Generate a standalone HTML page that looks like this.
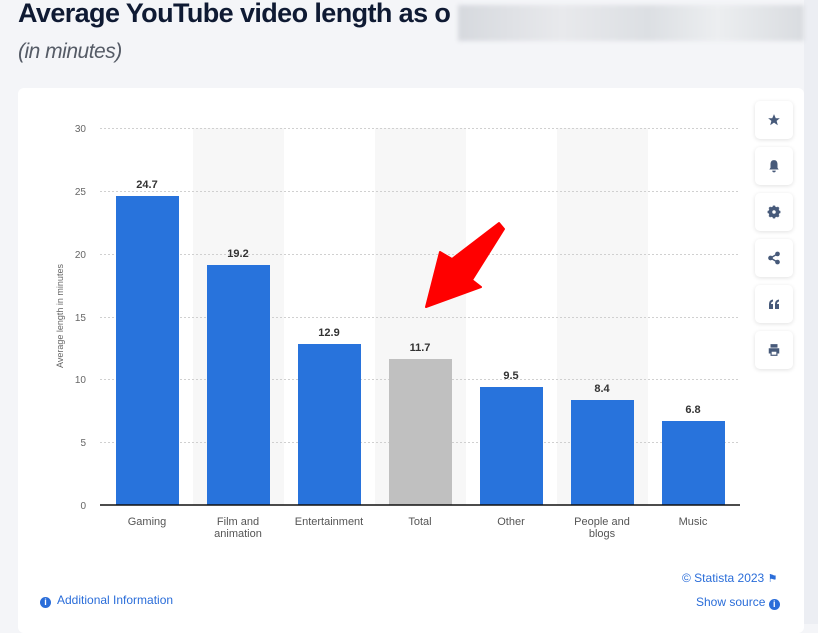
<!DOCTYPE html>
<html><head><meta charset="utf-8"><style>
body{margin:0;width:818px;height:624px;overflow:hidden;background:#f4f5f8;font-family:"Liberation Sans",sans-serif;position:relative}
.t{position:absolute;left:18px;top:-2px;font-size:27px;color:#0f1a33;font-weight:bold;letter-spacing:-0.6px}
.st{position:absolute;left:18px;top:40px;font-size:21px;color:#555b66;font-style:italic;letter-spacing:-0.5px}
.blur{position:absolute;left:458px;top:5px;width:346px;height:36px;background:linear-gradient(90deg,#d6d9de,#e8e9ec 30%,#dcdfe3 55%,#eceef0 75%,#d9dce0);filter:blur(2px)}
.card{position:absolute;left:18px;top:88px;width:786px;height:545px;background:#fff;border-radius:6px}
.strip{position:absolute;left:804px;top:0;width:14px;height:624px;background:#eceef3}
.btn{position:absolute;left:755px;width:38px;height:38px;background:#fff;border-radius:5px;box-shadow:0 1px 4px rgba(0,0,0,.12);display:flex;align-items:center;justify-content:center}
.lbl{position:absolute;font-size:11px;color:#555;text-align:center;width:90px;line-height:12px}
.link{position:absolute;font-size:12px;color:#2a6dd9}
</style></head><body>
<div class="strip"></div>
<div class="t">Average YouTube video length as o</div>
<div class="blur"></div>
<div class="st">(in minutes)</div>
<div class="card"></div>
<svg style="position:absolute;left:0;top:0" width="818" height="624">
<g fill="#f7f7f7"><rect x="193" y="128" width="91" height="377"/><rect x="375" y="128" width="91" height="377"/><rect x="557" y="128" width="91" height="377"/></g>
<g stroke="#d0d0d0" stroke-dasharray="2,2" stroke-width="1">
<line x1="100" x2="740" y1="128.5" y2="128.5"/><line x1="100" x2="740" y1="191.5" y2="191.5"/><line x1="100" x2="740" y1="254.5" y2="254.5"/><line x1="100" x2="740" y1="317.5" y2="317.5"/><line x1="100" x2="740" y1="379.5" y2="379.5"/><line x1="100" x2="740" y1="442.5" y2="442.5"/></g>
<g font-size="10" fill="#666" text-anchor="end" font-family="Liberation Sans">
<text x="86" y="132">30</text><text x="86" y="195">25</text><text x="86" y="258">20</text><text x="86" y="321">15</text><text x="86" y="383">10</text><text x="86" y="446">5</text><text x="86" y="509">0</text></g>
<text transform="translate(63,316) rotate(-90)" font-size="9" fill="#666" text-anchor="middle" font-family="Liberation Sans">Average length in minutes</text>
<g fill="#2873dc"><rect x="116" y="196" width="63" height="309"/><rect x="207" y="265" width="63" height="240"/><rect x="298" y="344" width="63" height="161"/><rect x="480" y="387" width="63" height="118"/><rect x="571" y="400" width="63" height="105"/><rect x="662" y="421" width="63" height="84"/></g>
<rect x="389" y="359" width="63" height="146" fill="#c0c0c0"/>
<line x1="100" x2="740" y1="505" y2="505" stroke="#111" stroke-width="1.5"/>
<g font-size="11" font-weight="bold" fill="#333" text-anchor="middle" font-family="Liberation Sans">
<text x="147" y="188">24.7</text><text x="238" y="257">19.2</text><text x="329" y="336">12.9</text><text x="420" y="351">11.7</text><text x="511" y="379">9.5</text><text x="602" y="392">8.4</text><text x="693" y="413">6.8</text></g>
<polygon points="426,307 440,252 452,259 499,223 504,229 472,280 481,287" fill="#ff0000" stroke="#ff0000" stroke-width="2" stroke-linejoin="round"/>
</svg>
<div class="lbl" style="left:102px;top:516px">Gaming</div>
<div class="lbl" style="left:193px;top:516px">Film and<br>animation</div>
<div class="lbl" style="left:284px;top:516px">Entertainment</div>
<div class="lbl" style="left:375px;top:516px">Total</div>
<div class="lbl" style="left:466px;top:516px">Other</div>
<div class="lbl" style="left:557px;top:516px">People and<br>blogs</div>
<div class="lbl" style="left:648px;top:516px">Music</div>
<div class="btn" style="top:101px"><svg width="14" height="14" viewBox="0 0 24 24"><path d="M12 2l3 7h7l-5.5 4.5 2 7.5-6.5-4.5-6.5 4.5 2-7.5L2 9h7z" fill="#475a7a"/></svg></div>
<div class="btn" style="top:147px"><svg width="14" height="14" viewBox="0 0 24 24"><path d="M12 2c-4 0-6 3-6 7v6l-2 3h16l-2-3V9c0-4-2-7-6-7zM9 20h6a3 3 0 0 1-6 0z" fill="#475a7a"/></svg></div>
<div class="btn" style="top:193px"><svg width="14" height="14" viewBox="0 0 24 24"><circle cx="12" cy="12" r="7" fill="none" stroke="#475a7a" stroke-width="5"/><g stroke="#475a7a" stroke-width="4"><line x1="12" y1="1" x2="12" y2="23"/><line x1="1" y1="12" x2="23" y2="12"/><line x1="4" y1="4" x2="20" y2="20"/><line x1="20" y1="4" x2="4" y2="20"/></g><circle cx="12" cy="12" r="3" fill="#fff"/></svg></div>
<div class="btn" style="top:239px"><svg width="14" height="14" viewBox="0 0 24 24"><g fill="#475a7a"><circle cx="18" cy="5" r="4"/><circle cx="6" cy="12" r="4"/><circle cx="18" cy="19" r="4"/></g><path d="M18 5L6 12l12 7" stroke="#475a7a" stroke-width="2.5" fill="none"/></svg></div>
<div class="btn" style="top:285px"><svg width="12" height="10" viewBox="0 0 24 20"><path d="M2 20V10Q2 2 10 1v4Q6 6 6 10h4v10zM14 20V10q0-8 8-9v4q-4 1-4 5h4v10z" fill="#475a7a"/></svg></div>
<div class="btn" style="top:331px"><svg width="14" height="14" viewBox="0 0 24 24"><path d="M6 2h12v6H6zM3 9h18v9h-3v4H6v-4H3z" fill="#475a7a"/><rect x="8" y="15" width="8" height="5" fill="#fff"/></svg></div>
<div class="link" style="left:40px;top:593px"><span style="display:inline-block;width:11px;height:11px;border-radius:50%;background:#2a6dd9;color:#fff;font-size:9px;text-align:center;line-height:11px;font-weight:bold;vertical-align:-1px">i</span>&nbsp; Additional Information</div>
<div class="link" style="left:682px;top:571px;color:#2a6dd9">© Statista 2023 <span style="font-size:11px">&#9873;</span></div>
<div class="link" style="left:696px;top:595px">Show source <span style="display:inline-block;width:11px;height:11px;border-radius:50%;background:#2a6dd9;color:#fff;font-size:9px;text-align:center;line-height:11px;font-weight:bold;vertical-align:-1px">i</span></div>
</body></html>
